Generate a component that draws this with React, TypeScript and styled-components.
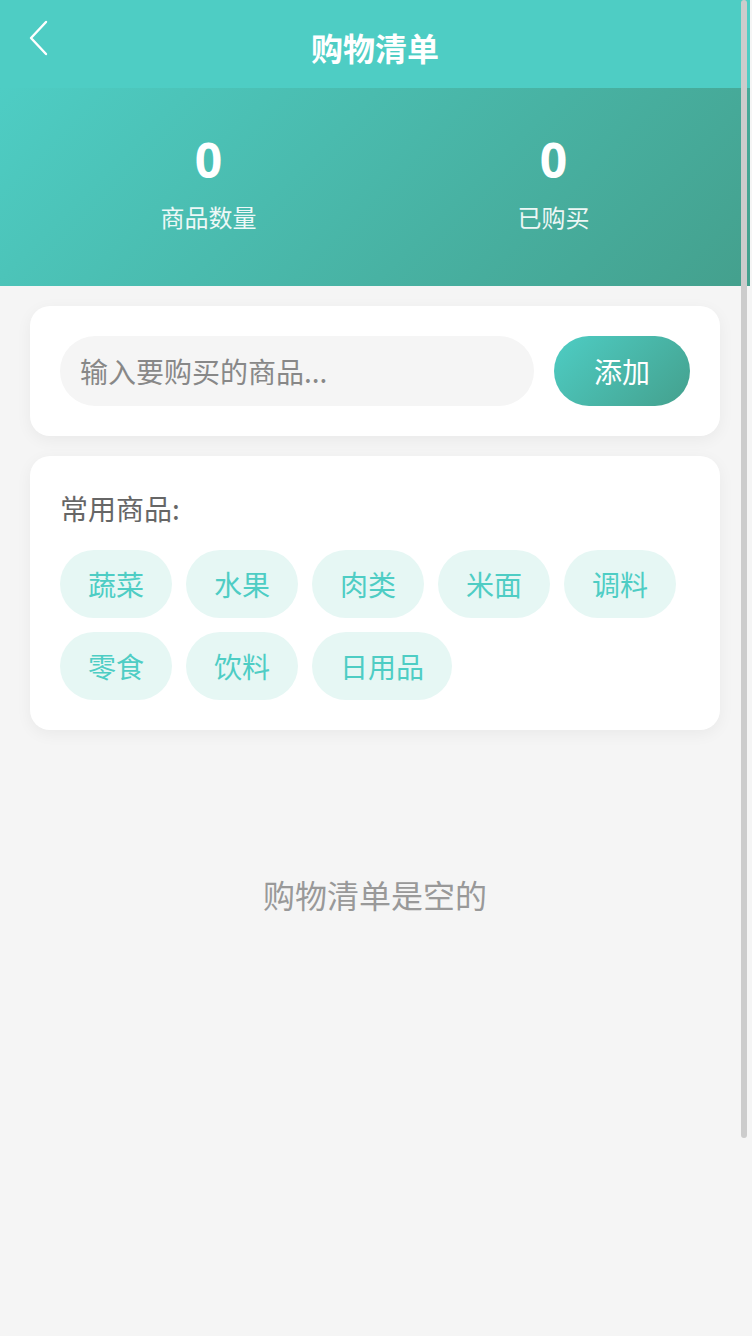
import React, { useState } from "react";
import styled, { createGlobalStyle } from "styled-components";

const primary = "#4ECDC4";
const primaryDark = "#44A08D";

const GlobalStyle = createGlobalStyle`
  html, body {
    margin: 0;
    padding: 0;
    background: #f5f5f5;
  }
  body {
    font-family: "Noto Sans CJK SC", "Noto Sans", "Liberation Sans", sans-serif;
  }
  * { box-sizing: border-box; }
`;

const Page = styled.div`
  width: 750px;
  min-height: 100vh;
  background: #f5f5f5;
  padding-bottom: 40px;
`;

const Header = styled.div`
  height: 88px;
  background: ${primary};
  display: grid;
  grid-template-columns: 80px 1fr 80px;
  align-items: center;
  padding-top: 6px;
`;

const BackButton = styled.button`
  align-self: start;
  margin-top: 12px;
  margin-left: 24px;
  width: 28px;
  height: 40px;
  padding: 0;
  border: 0;
  background: none;
  display: flex;
  align-items: center;
  justify-content: center;
  cursor: pointer;
`;

const Title = styled.h1`
  margin: 0;
  text-align: center;
  color: #fff;
  font-size: 32px;
  font-weight: 700;
  line-height: 44px;
`;

const Banner = styled.div`
  background: linear-gradient(135deg, ${primary} 0%, ${primaryDark} 100%);
  display: flex;
  justify-content: space-around;
  padding: 44px 30px 52px;
`;

const Stat = styled.div`
  display: flex;
  flex-direction: column;
  align-items: center;
  color: #fff;
`;

const StatValue = styled.div`
  font-family: "Noto Sans", "Liberation Sans", sans-serif;
  font-size: 48px;
  font-weight: 700;
  line-height: 56px;
`;

const StatLabel = styled.div`
  margin-top: 12px;
  font-size: 24px;
  line-height: 34px;
  opacity: 0.9;
`;

const Card = styled.div`
  margin: 20px 30px 0;
  background: #fff;
  border-radius: 20px;
  padding: 30px;
  box-shadow: 0 4px 16px rgba(0, 0, 0, 0.05);
`;

const InputRow = styled.div`
  display: flex;
  gap: 20px;
`;

const Input = styled.input`
  flex: 1;
  min-width: 0;
  height: 70px;
  border: 0;
  outline: none;
  border-radius: 35px;
  background: #f5f5f5;
  padding: 0 20px;
  font-family: inherit;
  font-size: 28px;
  color: #333;
  &::placeholder {
    color: #888;
  }
`;

const AddButton = styled.button`
  height: 70px;
  padding: 0 40px;
  border: 0;
  border-radius: 35px;
  background: linear-gradient(135deg, ${primary} 0%, ${primaryDark} 100%);
  color: #fff;
  font-family: inherit;
  font-size: 28px;
  cursor: pointer;
`;

const SectionTitle = styled.div`
  font-size: 28px;
  line-height: 44px;
  color: #666;
  margin-bottom: 20px;
`;

const TagList = styled.div`
  display: flex;
  flex-wrap: wrap;
  gap: 14px;
`;

const Tag = styled.button`
  height: 68px;
  padding: 0 28px;
  border: 0;
  border-radius: 34px;
  background: #e6f7f4;
  color: ${primary};
  font-family: inherit;
  font-size: 28px;
  cursor: pointer;
`;

const Empty = styled.div`
  margin-top: 140px;
  text-align: center;
  font-size: 32px;
  line-height: 48px;
  color: #999;
`;

const ScrollThumb = styled.div`
  position: fixed;
  top: 0;
  right: 5px;
  width: 6px;
  height: 1138px;
  border-radius: 3px;
  background: #cccccc;
`;

const quickItems = ["蔬菜", "水果", "肉类", "米面", "调料", "零食", "饮料", "日用品"];

export default function App() {
  const [text, setText] = useState("");
  return (
    <Page>
      <GlobalStyle />
      <Header>
        <BackButton aria-label="返回">
          <svg width="22" height="36" viewBox="0 0 22 36" fill="none">
            <polyline
              points="19,2 4,18 19,34"
              stroke="#fff"
              strokeWidth="2.4"
              strokeLinecap="round"
              strokeLinejoin="round"
            />
          </svg>
        </BackButton>
        <Title>购物清单</Title>
        <div />
      </Header>
      <Banner>
        <Stat>
          <StatValue>0</StatValue>
          <StatLabel>商品数量</StatLabel>
        </Stat>
        <Stat>
          <StatValue>0</StatValue>
          <StatLabel>已购买</StatLabel>
        </Stat>
      </Banner>
      <Card>
        <InputRow>
          <Input
            value={text}
            placeholder="输入要购买的商品..."
            onChange={(e) => setText(e.target.value)}
          />
          <AddButton>添加</AddButton>
        </InputRow>
      </Card>
      <Card>
        <SectionTitle>常用商品:</SectionTitle>
        <TagList>
          {quickItems.map((item) => (
            <Tag key={item} onClick={() => setText(item)}>
              {item}
            </Tag>
          ))}
        </TagList>
      </Card>
      <Empty>购物清单是空的</Empty>
      <ScrollThumb />
    </Page>
  );
}
